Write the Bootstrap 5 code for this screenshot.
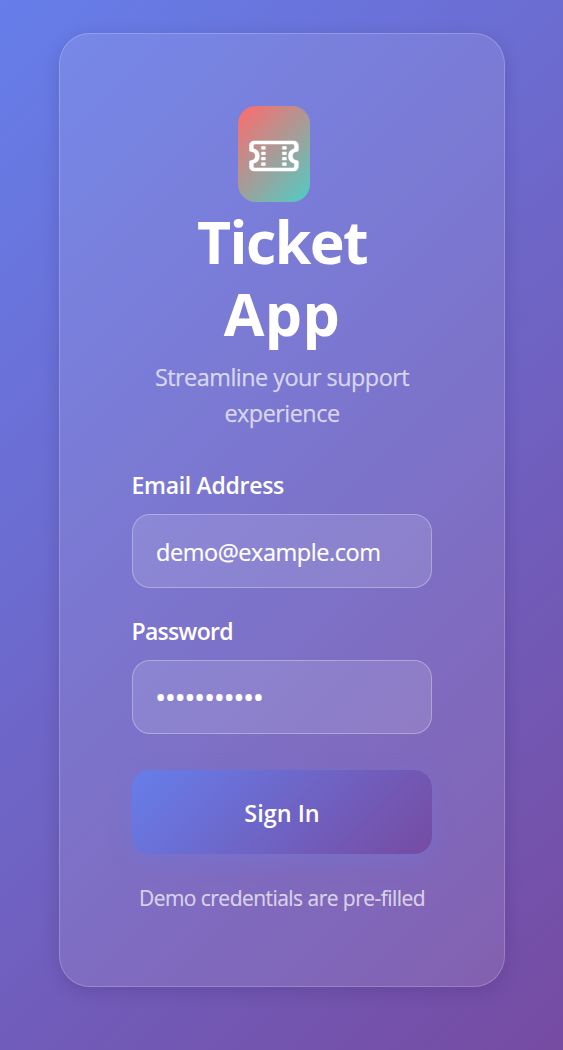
<!DOCTYPE html>
<html lang="en">
<head>
<meta charset="utf-8">
<meta name="viewport" content="width=device-width, initial-scale=1">
<title>Ticket App</title>
<link href="https://cdn.jsdelivr.net/npm/bootstrap@5.3.0/dist/css/bootstrap.min.css" rel="stylesheet">
<style>
body{font-family:"Open Sans","Noto Sans",sans-serif;font-size:24px;line-height:36px;color:#fff;background:linear-gradient(135deg,#667eea 0%,#764ba2 100%);height:1050px;overflow:hidden}
.page{padding:33px 58px 0 59px}
.login-card{height:954px;padding:72px;border:1px solid rgba(255,255,255,.2);border-radius:31px;background:rgba(255,255,255,.1);box-shadow:0 5px 18px rgba(20,10,60,.14)}
.brand-icon{width:72px;height:96px;border-radius:18px;background:linear-gradient(135deg,#ff6b6b,#4ecdc4);margin-right:17px}
.brand-icon svg{width:50px;height:48px;margin-top:4px}
h1{font-size:59px;line-height:72px;font-weight:700;margin:3px 0 0}
.line-first{letter-spacing:-1.6px}
.line-second{letter-spacing:.4px}
.tagline{font-size:23.4px;line-height:36px;color:rgba(255,255,255,.7);letter-spacing:-.5px;margin-top:10px;-webkit-text-stroke:.25px rgba(255,255,255,.5)}
.form-label{font-size:23px;line-height:36px;font-weight:600;letter-spacing:-.3px;margin:0 0 11px -.5px}
.label-tight{letter-spacing:-.7px}
.form-control,.form-control:focus{height:74px;padding:19px 23px 18px;border:1px solid rgba(255,255,255,.3);border-radius:18px;background:rgba(255,255,255,.12);color:#fff;font-size:23.5px;letter-spacing:-.45px;-webkit-text-stroke:.2px #fff}
.form-control.secret{font-size:30px;letter-spacing:-1.5px;padding:18px 22px 20px}
.btn-sign{height:84px;margin-top:36px;padding-top:9px;border:0;border-radius:18px;background:linear-gradient(135deg,#667eea,#764ba2);color:#fff;font-size:23.4px;font-weight:600;box-shadow:0 6px 22px rgba(102,126,234,.3)}
.first-field{margin-top:36px}
.second-field{margin-top:25px}
.hint{font-size:21px;line-height:32px;color:rgba(255,255,255,.7);letter-spacing:-.54px;margin-top:28px;-webkit-text-stroke:.2px rgba(255,255,255,.5)}
</style>
</head>
<body>
<main class="page">
<div class="login-card">
<header class="text-center">
<div class="d-flex justify-content-center">
<div class="brand-icon d-flex align-items-center justify-content-center">
<svg viewBox="-.1 0 16.67 16" fill="#fff" stroke="#fff" stroke-width=".1" aria-hidden="true">
<g id="ticket"><path d="M4 4.85v.9h1v-.9zm7 0v.9h1v-.9zm-7 1.8v.9h1v-.9zm7 0v.9h1v-.9zm-7 1.8v.9h1v-.9zm7 0v.9h1v-.9zm-7 1.8v.9h1v-.9zm7 0v.9h1v-.9z"/><path d="M1.5 3A1.5 1.5 0 0 0 0 4.5V6a.5.5 0 0 0 .5.5 1.5 1.5 0 1 1 0 3 .5.5 0 0 0-.5.5v1.5A1.5 1.5 0 0 0 1.5 13h13a1.5 1.5 0 0 0 1.5-1.5V10a.5.5 0 0 0-.5-.5 1.5 1.5 0 0 1 0-3A.5.5 0 0 0 16 6V4.5A1.5 1.5 0 0 0 14.5 3zM1 4.5a.5.5 0 0 1 .5-.5h13a.5.5 0 0 1 .5.5v1.05a2.5 2.5 0 0 0 0 4.9v1.05a.5.5 0 0 1-.5.5h-13a.5.5 0 0 1-.5-.5v-1.05a2.5 2.5 0 0 0 0-4.9z"/></g>
<use href="#ticket" x=".4"/>
</svg>
</div>
</div>
<h1><span class="line-first d-block">Ticket</span><span class="line-second d-block">App</span></h1>
<p class="tagline mb-0">Streamline your support<br>experience</p>
</header>
<form onsubmit="return false">
<div class="first-field">
<label class="form-label d-block" for="email">Email Address</label>
<input class="form-control shadow-none" id="email" type="email" value="demo@example.com">
</div>
<div class="second-field">
<label class="form-label label-tight d-block" for="password">Password</label>
<input class="form-control shadow-none secret" id="password" type="password" value="password123">
</div>
<button class="btn btn-sign w-100">Sign In</button>
</form>
<p class="hint text-center text-nowrap mb-0">Demo credentials are pre-filled</p>
</div>
</main>
<script src="https://cdn.jsdelivr.net/npm/bootstrap@5.3.0/dist/js/bootstrap.bundle.min.js"></script>
</body>
</html>
